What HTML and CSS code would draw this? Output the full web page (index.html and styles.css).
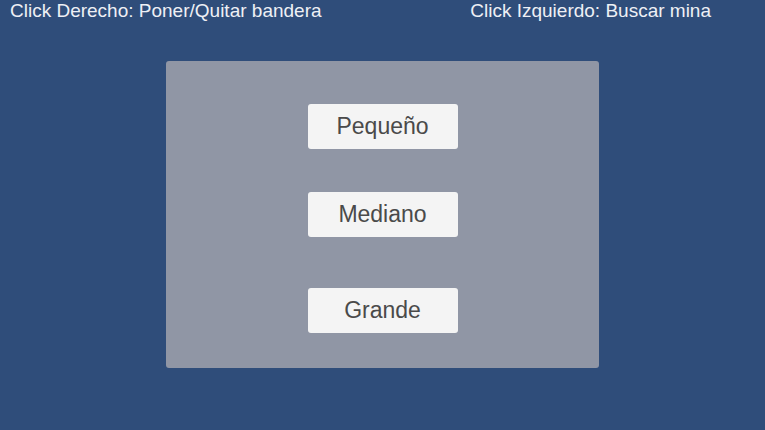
FILE: index.html
```html
<!DOCTYPE html>
<html lang="es">
<head>
    <meta charset="UTF-8">
    <meta name="viewport" content="width=device-width, initial-scale=1.0">
    <title>Buscaminas</title>
    <link rel="stylesheet" href="styles.css">
</head>
<body>
    <div class="hints">
        <span>Click Derecho: Poner/Quitar bandera</span>
        <span>Click Izquierdo: Buscar mina</span>
    </div>

    <div class="menu">
        <button class="size-btn first">Pequeño</button>
        <button class="size-btn second">Mediano</button>
        <button class="size-btn third">Grande</button>
    </div>
</body>
</html>
```

FILE: styles.css
```css
body {
    font-family: "Liberation Sans", Arial, sans-serif;
    background-color: #2f4d7a;
    margin: 0;
    height: 430px;
    overflow: hidden;
}
.hints {
    display: flex;
    justify-content: space-between;
    padding: 0 54px 0 10px;
    height: 22px;
    line-height: 22px;
    color: #eef0f5;
    font-size: 19px;
}
.menu {
    display: flex;
    flex-direction: column;
    align-items: center;
    margin: 39px 0 0 166px;
    width: 433px;
    height: 307px;
    box-sizing: border-box;
    padding-top: 43px;
    background-color: #9096a5;
    border-radius: 3px;
}
.size-btn {
    width: 150px;
    height: 45px;
    background-color: #f4f4f4;
    color: #4a4a4a;
    font-family: "Liberation Sans", Arial, sans-serif;
    font-size: 23px;
    border: none;
    border-radius: 3px;
    padding: 0;
    cursor: pointer;
}
.second {
    margin-top: 43px;
}
.third {
    margin-top: 51px;
}
```
